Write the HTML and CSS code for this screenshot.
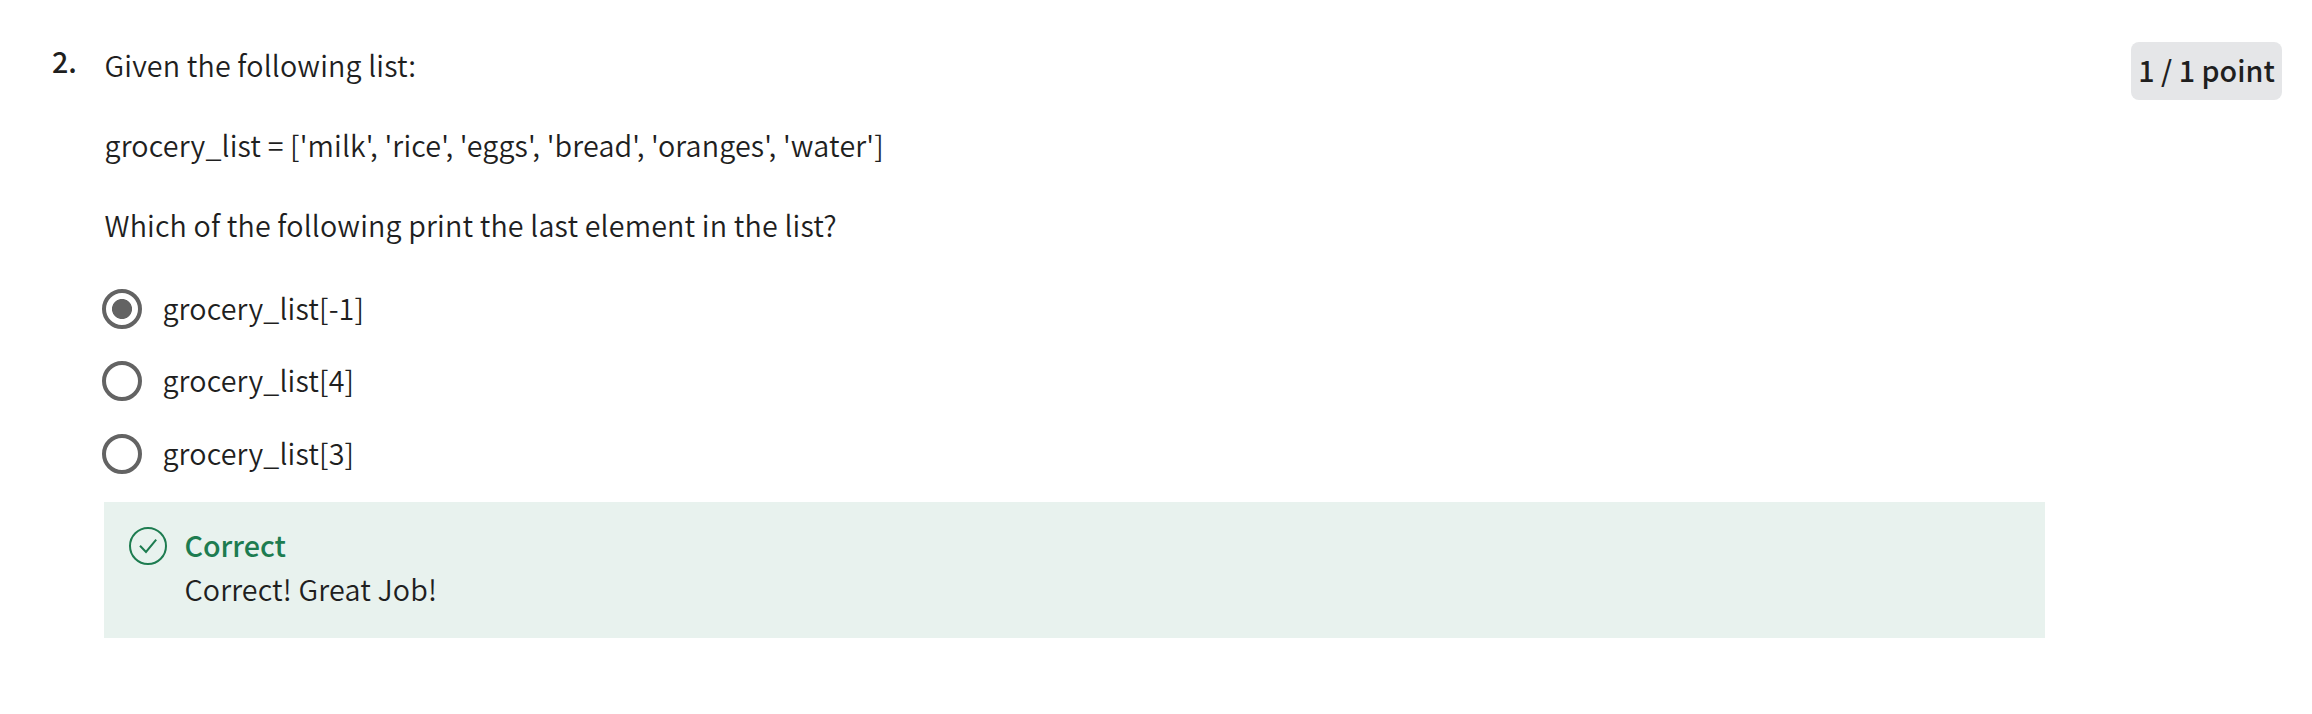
FILE: index.html
```html
<!DOCTYPE html>
<html lang="en">
<head>
<meta charset="utf-8">
<title>Quiz question</title>
<link rel="stylesheet" href="styles.css">
</head>
<body>
<main class="question">
  <div class="number">2.</div>
  <section class="content">
    <div class="prompt">
      <p>Given the following list:</p>
      <p>grocery_list = ['milk', 'rice', 'eggs', 'bread', 'oranges', 'water']</p>
      <p>Which of the following print the last element in the list?</p>
    </div>
    <ul class="options">
      <li class="option"><span class="radio checked"></span><span>grocery_list[-1]</span></li>
      <li class="option"><span class="radio"></span><span>grocery_list[4]</span></li>
      <li class="option"><span class="radio"></span><span>grocery_list[3]</span></li>
    </ul>
    <div class="feedback">
      <svg class="check" viewBox="0 0 40 40" fill="none" stroke="#1d7c50" stroke-width="2"><circle cx="20" cy="20" r="18"/><path d="M12 19.7l6 6.3 10.2-12.3"/></svg>
      <div>
        <div class="verdict">Correct</div>
        <div class="message">Correct! Great Job!</div>
      </div>
    </div>
  </section>
  <div class="points">1 / 1 point</div>
</main>
</body>
</html>
```
FILE: styles.css
```css
body {
  margin: 0;
  background: #fff;
  color: #1f1f1f;
  font: 350 28.7px/37px "Noto Sans CJK SC DemiLight", "Noto Sans CJK SC", sans-serif;
  letter-spacing: 0.145px;
}
.question {
  display: flex;
  align-items: flex-start;
  padding: 42px 30px 0 52px;
}
.number, .verdict, .points {
  font-family: "Noto Sans CJK SC Medium", "Noto Sans CJK SC", sans-serif;
  font-weight: 500;
  letter-spacing: 0;
}
.number { width: 52px; }
.content { width: 1941px; }
.prompt { display: grid; gap: 43px; padding: 4px 0 0 0.5px; }
.prompt p { margin: 0; }
.options { list-style: none; margin: 46px 0 0; padding: 0; display: grid; gap: 32.4px; }
.option { display: flex; align-items: flex-start; gap: 20.4px; height: 40px; }
.radio {
  box-sizing: border-box;
  width: 40px;
  height: 40px;
  margin-left: -2px;
  border: 4px solid #636363;
  border-radius: 50%;
}
.checked { background: radial-gradient(circle, #636363 9.6px, transparent 10.4px); }
.feedback {
  display: flex;
  gap: 16.4px;
  height: 136px;
  margin-top: 28.2px;
  padding: 24px 24px 0;
  box-sizing: border-box;
  background: #e8f2ee;
}
.check { width: 40px; height: 40px; }
.verdict { color: #1d7c50; margin-bottom: 7px; }
.points {
  box-sizing: border-box;
  width: 151px;
  height: 58px;
  margin-left: auto;
  padding-top: 9px;
  border-radius: 8px;
  background: #e5e6e8;
  text-align: center;
}
```
